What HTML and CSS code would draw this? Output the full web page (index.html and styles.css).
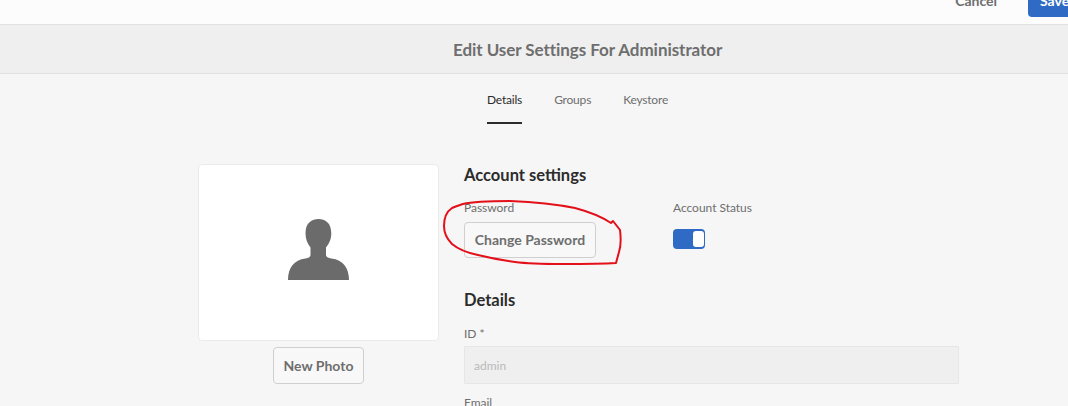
FILE: index.html
```html
<!DOCTYPE html>
<html lang="en">
<head>
<meta charset="utf-8">
<title>Edit User Settings</title>
<link rel="stylesheet" href="styles.css">
</head>
<body>
<header class="toolbar">
  <span class="cancel">Cancel</span>
  <button class="save">Save</button>
</header>
<div class="titlebar"><h1>Edit User Settings For Administrator</h1></div>
<nav class="tabs">
  <a class="tab active">Details</a>
  <a class="tab">Groups</a>
  <a class="tab">Keystore</a>
</nav>
<main class="content">
  <section class="photo-col">
    <div class="photo">
      <svg class="avatar" width="61" height="61" viewBox="0 0 61 61"><path fill="#6b6b6b" d="M30.500 0C24 0 17.500 3.500 17.500 14.500C17.500 20 19.500 25 22.500 28.500V36C22.500 38 21 39 17.500 39.500C6 41 0 49 0 61H61C61 49 55 41 43.500 39.500C40 39 38 38 38 36V28.500C41 25 43.300 20 43.300 14.500C43.300 3.500 37 0 30.500 0Z"/></svg>
    </div>
    <button class="btn">New Photo</button>
  </section>
  <section class="form-col">
    <h2 class="h-account">Account settings</h2>
    <div class="row">
      <div class="field-pass">
        <div class="label">Password</div>
        <button class="btn">Change Password</button>
      </div>
      <div>
        <div class="label">Account Status</div>
        <div class="switch"><span class="knob"></span></div>
      </div>
    </div>
    <h2 class="h-details">Details</h2>
    <div class="label label-id">ID *</div>
    <div class="input">admin</div>
    <div class="label label-email">Email</div>
  </section>
</main>
<svg class="scribble" width="1068" height="406" viewBox="0 0 1068 406"><path fill="none" stroke="#e3101a" stroke-width="2" stroke-linecap="round" stroke-linejoin="round" d="M463 204C475 201 490 201 510 201C535 202 555 204 575 208C590 212 602 217 611 223L613 221L620 230C621 238 621 246 619 252L616 263C600 264 585 264 563 264C545 264 530 264 515 262C500 260 490 258 478 255C468 253 458 249 452 244C446 238 444 232 444 226C444 218 446 212 452 208C456 206 460 205 463 204Z"/></svg>
</body>
</html>
```

FILE: styles.css
```css
* { box-sizing: border-box; }
html, body { margin: 0; height: 406px; overflow: hidden; }
body { background: #f6f6f6; font-family: "Lato", "Open Sans", sans-serif; color: #4b4b4b; position: relative; }
.toolbar { height: 25px; background: #fcfcfc; border-bottom: 1px solid #e1e1e1; display: flex; justify-content: flex-end; align-items: flex-end; overflow: hidden; padding: 0 0 7px 0; }
.cancel { font-size: 14px; font-weight: 700; color: #6e6e6e; line-height: 18px; margin-right: 31px; margin-bottom: 7px; flex: none; }
.save { flex: none; width: 40px; height: 32px; background: #2f6bc4; color: #fff; border: 0; border-radius: 4px 0 0 4px; font: 700 14px "Lato", sans-serif; padding: 0 0 0 12px; text-align: left; line-height: 30px; }
.titlebar { height: 49px; background: #efefef; border-bottom: 1px solid #e1e1e1; display: flex; align-items: center; padding-left: 453px; }
.titlebar h1 { margin: 0; font-size: 17px; font-weight: 700; color: #6e6e6e; letter-spacing: -0.05px; }
.tabs { display: flex; gap: 32px; padding-left: 487px; height: 50px; }
.tab { font-size: 12px; color: #6e6e6e; height: 50px; padding-top: 18px; line-height: 16px; letter-spacing: -0.2px; }
.tab.active { color: #2c2c2c; border-bottom: 2px solid #2c2c2c; }
.content { display: flex; gap: 25px; padding: 40px 0 0 198px; }
.photo-col { width: 241px; display: flex; flex-direction: column; align-items: center; gap: 6px; }
.photo { width: 241px; height: 177px; background: #fff; border: 1px solid #ebebeb; border-radius: 4px; display: flex; align-items: center; justify-content: center; padding-bottom: 6px; }
.avatar { display: block; }
.btn { height: 37px; padding: 0 10px; background: #f8f8f8; border: 1px solid #cfcfcf; border-radius: 4px; font: 700 14px "Lato", sans-serif; color: #6e6e6e; }
.form-col { width: 495px; }
h2 { margin: 0; font-size: 16.5px; font-weight: 700; color: #2c2c2c; line-height: 22px; }
.label { font-size: 12px; color: #6e6e6e; line-height: 16px; letter-spacing: -0.03px; }
.row { display: flex; margin-top: 14px; }
.field-pass { width: 209px; }
.field-pass .btn { margin-top: 6px; width: 132px; height: 36px; padding: 0 0 2px; display: block; }
.switch { width: 32px; height: 20px; margin-top: 13px; background: #2f6bc4; border-radius: 4px; padding: 2px 1px 2px 20px; }
.knob { display: block; width: 11px; height: 16px; background: #fff; border-radius: 3px; }
.h-details { margin-top: 31px; }
.label-id { margin-top: 15px; }
.input { height: 38px; margin-top: 4px; background: #efefef; border: 1px solid #e6e6e6; border-radius: 1px; color: #b9b9b9; font-size: 12px; line-height: 37px; padding-left: 9px; }
.label-email { margin-top: 11px; }
.scribble { position: absolute; left: 0; top: 0; pointer-events: none; }
```
